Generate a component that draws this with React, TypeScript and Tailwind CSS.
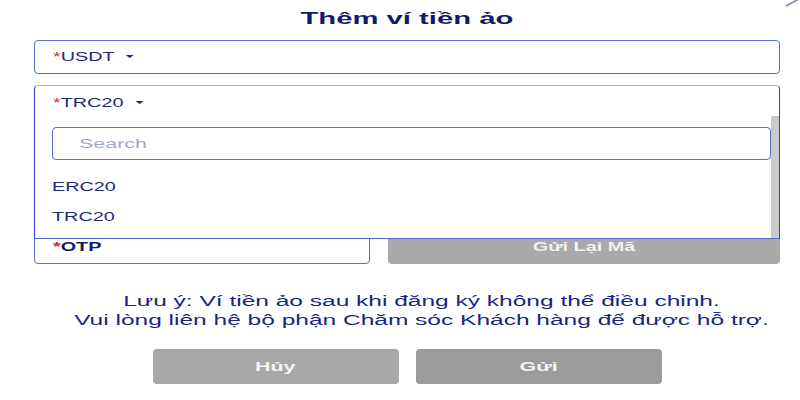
import type { ReactNode } from "react";

// the reference is a wide-stretched mobile screen, so text is widened on x
function Wide({ children, left = false, k = "md" }: { children: ReactNode; left?: boolean; k?: "md" | "lg" }) {
  const scale = k === "lg" ? "scale-x-[1.72]" : "scale-x-[1.65]";
  return (
    <span className={`inline-block whitespace-nowrap ${scale} ${left ? "origin-left" : "origin-center"}`}>
      {children}
    </span>
  );
}

function Caret() {
  return (
    <svg width="5" height="3" viewBox="0 0 5 3" className="ml-[7px] inline-block align-middle -mt-[2px]">
      <path d="M0 0h5L2.5 3z" fill="#1e2a78" />
    </svg>
  );
}

function Req() {
  return <span className="text-[#e2262c]">*</span>;
}

export default function App() {
  return (
    <div className="relative w-[800px] h-[400px] overflow-hidden bg-white font-['Liberation_Sans',Arial,sans-serif] text-[#1e2a78]">
      {/* close button, cut off by the top edge */}
      <svg className="absolute right-0 top-0" width="16" height="8" viewBox="0 0 16 8">
        <path d="M2 6L15 -1" stroke="#7884b6" strokeWidth="1.5" />
      </svg>

      <div className="ml-[34px] mr-[20px] flex flex-col">
        <h1 className="h-10 pb-[2px] flex items-center justify-center text-[17px] font-bold text-[#141a6a]">
          <Wide k="lg">Thêm ví tiền ảo</Wide>
        </h1>

        <div className="h-[34px] flex items-center pl-[18px] border border-[#5a6ec8] rounded-[4px] text-[12px]">
          <Wide left>
            <Req />
            USDT
            <Caret />
          </Wide>
        </div>

        {/* open network select */}
        <div className="relative z-10 mt-[11px] h-[34px]">
          <div className="absolute inset-x-0 top-0 h-[154px] bg-white border border-[#2a3dcf] border-t-[#aab3dc] border-b-[#5366d0] rounded-t-[4px]">
            <div className="h-[33px] flex items-center pl-[18px] text-[12px]">
              <Wide left>
                <Req />
                TRC20
                <Caret />
              </Wide>
            </div>
            <div className="ml-[17px] mr-2 mt-[8px] h-[33px] flex items-center pl-[26px] border border-[#5a6ec8] rounded-[4px] text-[13px] text-[#a3a8cc]">
              <Wide left>Search</Wide>
            </div>
            <div className="mt-[12px] text-[12px]">
              <div className="h-[30px] flex items-center pl-[17px]">
                <Wide left>ERC20</Wide>
              </div>
              <div className="h-[30px] flex items-center pl-[17px]">
                <Wide left>TRC20</Wide>
              </div>
            </div>
            <div className="absolute right-0 top-[30px] bottom-0 w-2 bg-[#cacaca]" />
          </div>
        </div>

        {/* fields hidden under the open list */}
        <div className="mt-[11px] h-[34px] border border-[#5a6ec8] rounded-[4px]" />
        <div className="mt-[11px] h-[34px] border border-[#5a6ec8] rounded-[4px]" />

        <div className="mt-[21px] h-[34px] flex gap-[18px]">
          <div className="w-[336px] flex items-center pl-[18px] border border-[#5a6ec8] rounded-[4px] text-[12px] font-bold text-[#141a6a]">
            <Wide left>
              <Req />
              OTP
            </Wide>
          </div>
          <button className="flex-1 flex items-center justify-center rounded-[4px] bg-[#a9a9a9] text-[12px] font-bold text-[#f2f2f2]">
            <Wide>Gửi Lại Mã</Wide>
          </button>
        </div>

        <p className="mt-[28px] pl-[28px] text-center text-[14px] leading-[19px] text-[#1a2680]">
          <span className="inline-block whitespace-nowrap scale-x-[1.75]">
            Lưu ý: Ví tiền ảo sau khi đăng ký không thể điều chỉnh.
            <br />
            Vui lòng liên hệ bộ phận Chăm sóc Khách hàng để được hỗ trợ.
          </span>
        </p>

        <div className="mt-[19px] flex justify-center gap-[17px]">
          <button className="w-[246px] h-[35px] rounded-[4px] bg-[#a8a8a8] text-[13px] font-bold text-[#f4f4f4]">
            <Wide>Hủy</Wide>
          </button>
          <button className="w-[246px] h-[35px] rounded-[4px] bg-[#9b9b9b] text-[13px] font-bold text-[#f4f4f4]">
            <Wide>Gửi</Wide>
          </button>
        </div>
      </div>
    </div>
  );
}
